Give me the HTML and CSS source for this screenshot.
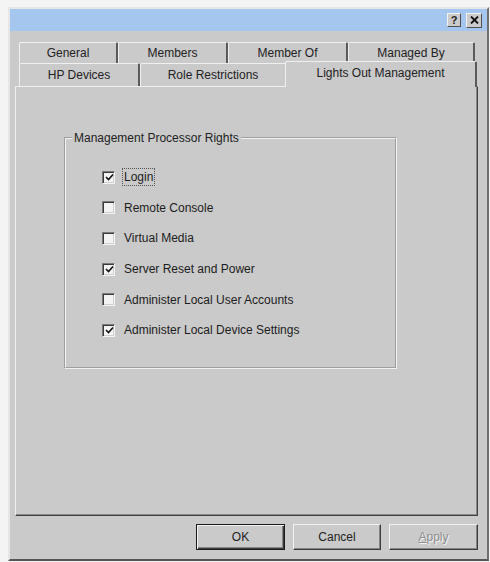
FILE: index.html
```html
<!DOCTYPE html>
<html>
<head>
<meta charset="utf-8">
<link rel="stylesheet" href="styles.css">
</head>
<body>
<div class="dialog">
  <div class="titlebar">
    <span class="cap-btn help">?</span>
    <span class="cap-btn close"><svg width="9" height="8" viewBox="0 0 9 8"><path d="M1 0.5 L8 7.5 M8 0.5 L1 7.5" stroke="#111" stroke-width="1.8"/></svg></span>
  </div>
  <div class="tabs">
    <div class="tabrow">
      <div class="tab w99">General</div>
      <div class="tab w110">Members</div>
      <div class="tab w120">Member Of</div>
      <div class="tab w127">Managed By</div>
    </div>
    <div class="tabrow">
      <div class="tab w121">HP Devices</div>
      <div class="tab w147">Role Restrictions</div>
      <div class="tab w188 selected">Lights Out Management</div>
    </div>
  </div>
  <div class="panel">
    <fieldset class="group">
      <legend>Management Processor Rights</legend>
      <div class="opts">
        <div class="opt"><span class="cb checked"><svg width="9" height="9" viewBox="0 0 9 9"><path d="M1 4 L3.5 6.5 L8 1.5" fill="none" stroke="#111" stroke-width="1.6"/></svg></span><span class="lbl focus">Login</span></div>
        <div class="opt"><span class="cb"></span><span class="lbl">Remote Console</span></div>
        <div class="opt"><span class="cb"></span><span class="lbl">Virtual Media</span></div>
        <div class="opt"><span class="cb checked"><svg width="9" height="9" viewBox="0 0 9 9"><path d="M1 4 L3.5 6.5 L8 1.5" fill="none" stroke="#111" stroke-width="1.6"/></svg></span><span class="lbl">Server Reset and Power</span></div>
        <div class="opt"><span class="cb"></span><span class="lbl">Administer Local User Accounts</span></div>
        <div class="opt"><span class="cb checked"><svg width="9" height="9" viewBox="0 0 9 9"><path d="M1 4 L3.5 6.5 L8 1.5" fill="none" stroke="#111" stroke-width="1.6"/></svg></span><span class="lbl">Administer Local Device Settings</span></div>
      </div>
    </fieldset>
  </div>
  <div class="buttons">
    <div class="btn default"><span class="btn-in">OK</span></div>
    <div class="btn"><span class="btn-in">Cancel</span></div>
    <div class="btn disabled"><span class="btn-in"><u>A</u>pply</span></div>
  </div>
</div>
</body>
</html>
```
FILE: styles.css
```css
html, body {
  margin: 0;
  padding: 0;
  background: #f4f4f4;
}
body {
  font-family: "Liberation Sans", Arial, sans-serif;
  font-size: 12px;
  color: #1c1c1c;
  width: 490px;
  height: 562px;
  overflow: hidden;
}
.dialog {
  margin: 7px 0 0 8px;
  width: 481px;
  box-sizing: border-box;
  background: #cacaca;
  border: 2px solid;
  border-color: #e6e6e6 #6e6e6e #555 #e6e6e6;
  display: flex;
  flex-direction: column;
}
.titlebar {
  height: 22px;
  background: #a5c6ee;
  display: flex;
  align-items: center;
  justify-content: flex-end;
  gap: 5px;
  padding-right: 5px;
}
.cap-btn {
  width: 14px;
  height: 14px;
  box-sizing: border-box;
  background: #cbcbcb;
  border: 1px solid;
  border-color: #f2f2f2 #505050 #505050 #f2f2f2;
  display: flex;
  align-items: center;
  justify-content: center;
  font-weight: bold;
  font-size: 11px;
  line-height: 1;
  color: #222;
}
.cap-btn.close {
  width: 16px;
  height: 15px;
}
.tabs {
  margin: 11px 0 0 9px;
  width: 456px;
  display: flex;
  flex-direction: column;
}
.tabrow {
  display: flex;
}
.tab {
  box-sizing: border-box;
  height: 21px;
  border-top: 1px solid #f0f0f0;
  border-left: 1px solid #f0f0f0;
  border-right: 2px solid #5a5a5a;
  border-radius: 2px 2px 0 0;
  display: flex;
  align-items: center;
  justify-content: center;
  color: #222;
}
.tabrow + .tabrow .tab {
  height: 23px;
}
.w99 { width: 99px; }
.w110 { width: 110px; }
.w120 { width: 120px; }
.w127 { width: 127px; }
.w121 { width: 121px; }
.w147 { width: 147px; }
.w188 { width: 188px; }
.tab.selected {
  position: relative;
  z-index: 1;
  height: 26px !important;
  margin: -2px -2px -1px -2px;
  width: 192px;
  padding-bottom: 4px;
  background: #cacaca;
}
.panel {
  margin-left: 5px;
  width: 463px;
  height: 430px;
  box-sizing: border-box;
  border: 1px solid;
  border-color: #f0f0f0 #404040 #404040 #f0f0f0;
  box-shadow: inset -1px -1px 0 #8a8a8a;
  padding: 44px 0 0 48px;
}
.group {
  margin: 0;
  width: 333px;
  height: 238px;
  box-sizing: border-box;
  border: 2px groove #f2f2f2;
  padding: 17px 0 0 0;
}
.group legend {
  margin-left: 6px;
  padding: 0 2px;
  color: #222;
}
.opts {
  display: flex;
  flex-direction: column;
  padding-left: 36px;
}
.opt {
  height: 30.6px;
  display: flex;
  align-items: center;
}
.cb {
  width: 13px;
  height: 13px;
  box-sizing: border-box;
  border: 1px solid;
  border-color: #7a7a7a #f4f4f4 #f4f4f4 #7a7a7a;
  box-shadow: inset 1px 1px 0 #3a3a3a, inset -1px -1px 0 #cfcfcf;
  background: #f3f3f3;
  display: flex;
  align-items: center;
  justify-content: center;
  margin-right: 7px;
  flex: none;
}
.cb svg {
  margin: 1px 0 0 1px;
}
.lbl {
  padding: 1px 1px;
  border: 1px solid transparent;
}
.lbl.focus {
  border: 1px dotted #555;
}
.buttons {
  display: flex;
  justify-content: flex-end;
  gap: 8px;
  margin: 8px 9px 9px 0;
}
.btn {
  width: 89px;
  height: 26px;
  box-sizing: border-box;
  border: 1px solid;
  border-color: #f2f2f2 #3c3c3c #3c3c3c #f2f2f2;
  box-shadow: inset -1px -1px 0 #848484;
  display: flex;
  align-items: center;
  justify-content: center;
  color: #222;
}
.btn:nth-child(2) {
  width: 88px;
}
.btn.default {
  border: 1px solid #1a1a1a;
  box-shadow: inset 1px 1px 0 #f2f2f2, inset -1px -1px 0 #3c3c3c, inset -2px -2px 0 #848484;
}
.btn.disabled {
  color: #8e8e8e;
  text-shadow: 1px 1px 0 #f4f4f4;
}
.btn-in u {
  text-decoration-thickness: 1px;
}
```
